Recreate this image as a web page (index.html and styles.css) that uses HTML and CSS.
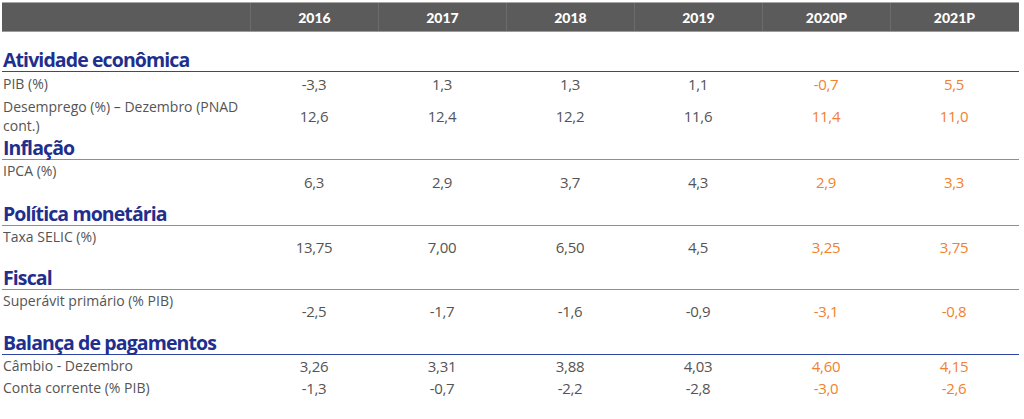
FILE: index.html
```html
<!DOCTYPE html>
<html lang="pt-BR">
<head>
<meta charset="utf-8">
<title>Projeções</title>
<link rel="stylesheet" href="styles.css">
</head>
<body>
<div class="table">
  <div class="head">
    <div class="hcell hlabel"></div>
    <div class="hcell">2016</div>
    <div class="hcell">2017</div>
    <div class="hcell">2018</div>
    <div class="hcell">2019</div>
    <div class="hcell">2020P</div>
    <div class="hcell">2021P</div>
  </div>

  <div class="section first dark"><span>Atividade econômica</span></div>
  <div class="row r-pib">
    <div class="label">PIB (%)</div>
    <div class="num">-3,3</div><div class="num">1,3</div><div class="num">1,3</div><div class="num">1,1</div>
    <div class="num proj">-0,7</div><div class="num proj">5,5</div>
  </div>
  <div class="row r-des">
    <div class="label">Desemprego (%) – Dezembro (PNAD cont.)</div>
    <div class="num">12,6</div><div class="num">12,4</div><div class="num">12,2</div><div class="num">11,6</div>
    <div class="num proj">11,4</div><div class="num proj">11,0</div>
  </div>

  <div class="section s-infl"><span>Inflação</span></div>
  <div class="row tall r-ipca">
    <div class="label">IPCA (%)</div>
    <div class="num">6,3</div><div class="num">2,9</div><div class="num">3,7</div><div class="num">4,3</div>
    <div class="num proj">2,9</div><div class="num proj">3,3</div>
  </div>

  <div class="section s-pol"><span>Política monetária</span></div>
  <div class="row tall">
    <div class="label">Taxa SELIC (%)</div>
    <div class="num">13,75</div><div class="num">7,00</div><div class="num">6,50</div><div class="num">4,5</div>
    <div class="num proj">3,25</div><div class="num proj">3,75</div>
  </div>

  <div class="section"><span>Fiscal</span></div>
  <div class="row tall">
    <div class="label">Superávit primário (% PIB)</div>
    <div class="num">-2,5</div><div class="num">-1,7</div><div class="num">-1,6</div><div class="num">-0,9</div>
    <div class="num proj">-3,1</div><div class="num proj">-0,8</div>
  </div>

  <div class="section dark s-bal"><span>Balança de pagamentos</span></div>
  <div class="row short">
    <div class="label">Câmbio - Dezembro</div>
    <div class="num">3,26</div><div class="num">3,31</div><div class="num">3,88</div><div class="num">4,03</div>
    <div class="num proj">4,60</div><div class="num proj">4,15</div>
  </div>
  <div class="row short">
    <div class="label">Conta corrente (% PIB)</div>
    <div class="num">-1,3</div><div class="num">-0,7</div><div class="num">-2,2</div><div class="num">-2,8</div>
    <div class="num proj">-3,0</div><div class="num proj">-2,6</div>
  </div>
</div>
</body>
</html>
```

FILE: styles.css
```css
* { box-sizing: border-box; }

html, body {
  margin: 0;
  padding: 0;
  background: #ffffff;
}

body {
  padding: 2px 5px 0 2px;
  font-family: "Open Sans", "Noto Sans", sans-serif;
  color: #545454;
}

.table {
  display: flex;
  flex-direction: column;
  width: 1017px;
}

.head {
  display: grid;
  grid-template-columns: 248px repeat(6, 128px);
  height: 30px;
  background: #5b5b5b;
  border-top: 1px solid #a8a8a8;
  border-bottom: 1px solid #9a9a9a;
}

.hcell {
  display: flex;
  align-items: center;
  justify-content: center;
  color: #ffffff;
  font-family: "Lato", "Open Sans", sans-serif;
  font-weight: 900;
  font-size: 14px;
  border-left: 1px solid #6c6c6c;
}

.hcell.hlabel { border-left: none; }

.section {
  display: flex;
  align-items: flex-end;
  height: 22px;
  border-bottom: 1px solid #7b8dca;
  color: #1f2f8e;
  font-weight: 700;
  font-size: 19.5px;
  line-height: 24px;
  letter-spacing: -0.9px;
  padding-left: 1px;
}

.section span { position: relative; top: 1px; }

.section.dark { border-bottom-color: #2f46a6; }

.section.first { height: 40px; }
.section.s-infl { height: 26px; }
.section.s-pol { height: 23px; }
.section.s-bal { height: 23px; }

.row {
  display: grid;
  grid-template-columns: 248px repeat(6, 128px);
  font-size: 14px;
  line-height: 20px;
}

.label {
  padding-left: 1px;
  padding-right: 6px;
}

.num {
  display: flex;
  align-items: center;
  justify-content: center;
  font-size: 15px;
  letter-spacing: -0.3px;
}

.num.proj { color: #f3812d; }

.r-pib { height: 24px; }
.r-pib .label { padding-top: 2px; }

.r-des { height: 38px; }
.r-des .label { line-height: 19px; padding-top: 1px; }

.tall { height: 42px; }
.tall .label { padding-top: 1px; }
.r-ipca { height: 43px; }

.short { height: 22px; }
.short .label { padding-top: 1px; }
```
